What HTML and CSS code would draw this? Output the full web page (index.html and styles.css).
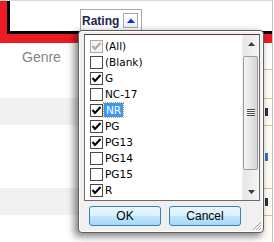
FILE: index.html
```html
<!DOCTYPE html>
<html lang="en">
<head>
    <title>Rating filter</title>
    <link rel="stylesheet" href="styles.css">
</head>
<body>
    <div class="page">
        <div class="banner">
            <div class="banner-inner">
                <div class="col-head">
                    <span class="col-title">Rating</span>
                    <span class="filter-btn">
                        <svg width="8" height="5" viewBox="0 0 8 5"><polygon points="0,5 4,0.5 8,5" fill="#0b2fd6"/></svg>
                    </span>
                </div>
            </div>
        </div>
        <div class="genre">Genre</div>
        <div class="rows">
            <div class="row top"><span class="cell"></span><span class="edge"></span></div>
            <div class="row alt"><span class="cell"></span><span class="edge"><i class="mark"></i></span></div>
            <div class="row tall"><span class="cell"></span><span class="edge"><i class="mark blue"></i></span></div>
            <div class="row alt"><span class="cell"></span><span class="edge"><i class="mark"></i></span></div>
            <div class="row"><span class="cell"></span><span class="edge"></span></div>
        </div>

        <div class="popup">
            <div class="listbox">
                <ul class="items">
                    <li class="item"><span class="cb disabled"><svg viewBox="0 0 11 11"><polyline points="1.5,5 4,8 9.5,2" /></svg></span><span class="label">(All)</span></li>
                    <li class="item"><span class="cb"></span><span class="label">(Blank)</span></li>
                    <li class="item"><span class="cb"><svg viewBox="0 0 11 11"><polyline points="1.5,5 4,8 9.5,2" /></svg></span><span class="label">G</span></li>
                    <li class="item"><span class="cb"></span><span class="label">NC-17</span></li>
                    <li class="item"><span class="cb"><svg viewBox="0 0 11 11"><polyline points="1.5,5 4,8 9.5,2" /></svg></span><span class="label selected">NR</span></li>
                    <li class="item"><span class="cb"><svg viewBox="0 0 11 11"><polyline points="1.5,5 4,8 9.5,2" /></svg></span><span class="label">PG</span></li>
                    <li class="item"><span class="cb"><svg viewBox="0 0 11 11"><polyline points="1.5,5 4,8 9.5,2" /></svg></span><span class="label">PG13</span></li>
                    <li class="item"><span class="cb"></span><span class="label">PG14</span></li>
                    <li class="item"><span class="cb"></span><span class="label">PG15</span></li>
                    <li class="item"><span class="cb"><svg viewBox="0 0 11 11"><polyline points="1.5,5 4,8 9.5,2" /></svg></span><span class="label">R</span></li>
                </ul>
                <div class="scrollbar">
                    <div class="sb-arrow">
                        <svg width="7" height="4" viewBox="0 0 7 4"><polygon points="0,4 3.5,0 7,4" fill="#3a3a3a"/></svg>
                    </div>
                    <div class="sb-track">
                        <div class="thumb">
                            <svg width="8" height="8" viewBox="0 0 8 8">
                                <rect x="0" y="0" width="8" height="1" fill="#4a4a4a"/>
                                <rect x="0" y="2" width="8" height="1" fill="#4a4a4a"/>
                                <rect x="0" y="4" width="8" height="1" fill="#4a4a4a"/>
                                <rect x="0" y="6" width="8" height="1" fill="#4a4a4a"/>
                                <rect x="0" y="1" width="8" height="1" fill="#ffffff"/>
                                <rect x="0" y="3" width="8" height="1" fill="#ffffff"/>
                                <rect x="0" y="5" width="8" height="1" fill="#ffffff"/>
                            </svg>
                        </div>
                    </div>
                    <div class="sb-arrow">
                        <svg width="7" height="4" viewBox="0 0 7 4"><polygon points="0,0 3.5,4 7,0" fill="#3a3a3a"/></svg>
                    </div>
                </div>
            </div>
            <div class="buttons">
                <button class="btn">OK</button>
                <button class="btn">Cancel</button>
            </div>
            <svg class="grip" width="10" height="10" viewBox="0 0 10 10">
                <line x1="9" y1="1" x2="1" y2="9" stroke="#9a9a9a" stroke-width="1"/>
                <line x1="9" y1="4" x2="4" y2="9" stroke="#9a9a9a" stroke-width="1"/>
                <line x1="9" y1="7" x2="7" y2="9" stroke="#9a9a9a" stroke-width="1"/>
                <line x1="10" y1="2" x2="2" y2="10" stroke="#ffffff" stroke-width="1"/>
                <line x1="10" y1="5" x2="5" y2="10" stroke="#ffffff" stroke-width="1"/>
            </svg>
        </div>
    </div>
</body>
</html>
```

FILE: styles.css
```css
html, body {
    margin: 0;
    padding: 0;
    background: #ffffff;
}
.page {
    position: relative;
    width: 272px;
    height: 241px;
    border-top: 1px solid #dadada;
    border-right: 1px solid #c4c4c4;
    border-bottom: 1px solid #c4c4c4;
    overflow: hidden;
    font-family: "Liberation Sans", Arial, sans-serif;
}
.banner {
    border-left: 7px solid #ed1c24;
    border-bottom: 9px solid #ed1c24;
}
.banner-inner {
    border-left: 3px solid #000000;
    border-bottom: 3px solid #000000;
    padding-top: 8px;
    padding-left: 70px;
    height: 22px;
}
.col-head {
    display: flex;
    align-items: center;
    width: 59px;
    height: 22px;
    border: 1px solid #a9a9a9;
    border-bottom: 0;
    padding-left: 1px;
    background: #ffffff;
}
.col-title {
    font-weight: bold;
    font-size: 12px;
    color: #1c2648;
    width: 41px;
}
.filter-btn {
    display: flex;
    align-items: center;
    justify-content: center;
    width: 13px;
    height: 13px;
    margin-top: -1px;
    border: 1px solid #a7a7a7;
    background: linear-gradient(#ffffff, #eef0f4);
}
.genre {
    padding: 6px 0 0 22px;
    height: 20px;
    font-size: 14px;
    color: #858585;
}
.rows {
    display: flex;
    flex-direction: column;
}
.row {
    display: flex;
    height: 27px;
}
.row.top {
    height: 29px;
}
.row.tall {
    height: 63px;
}
.row.alt {
    background: #f1f1f1;
}
.cell {
    flex: 1;
}
.edge {
    display: flex;
    align-items: center;
    width: 8px;
    border-top: 1px solid #d7c38c;
    background: #fffdf3;
}
.mark {
    width: 3px;
    height: 8px;
    margin-left: 1px;
    background: #2a2f4a;
}
.mark.blue {
    background: #3a6fc4;
}

.popup {
    position: absolute;
    left: 78px;
    top: 29px;
    width: 186px;
    height: 203px;
    box-sizing: border-box;
    border: 1px solid #5e5e5e;
    border-radius: 4px;
    background: #f0f0f0;
    box-shadow: -3px 3px 7px 1px rgba(0, 0, 0, 0.45), inset 0 0 0 1px #ffffff;
    padding: 3px 3px 0 5px;
}
.listbox {
    display: flex;
    height: 165px;
    border: 1px solid #6f6a6a;
    border-top-color: #5a3434;
    background: #ffffff;
}
.items {
    flex: 1;
    list-style: none;
    margin: 0;
    padding: 3px 0 0 5px;
}
.item {
    display: flex;
    align-items: center;
    height: 16px;
    font-family: "DejaVu Sans", sans-serif;
    font-size: 10.5px;
    color: #000000;
}
.cb {
    display: flex;
    width: 11px;
    height: 11px;
    border: 1px solid #4a4a4a;
    background: #ffffff;
    margin-right: 1px;
}
.cb svg {
    width: 11px;
    height: 11px;
}
.cb polyline {
    fill: none;
    stroke: #000000;
    stroke-width: 2;
}
.cb.disabled {
    border-color: #a8a8a8;
    background: #f4f4f4;
}
.cb.disabled polyline {
    stroke: #a8a8a8;
}
.label {
    padding: 1px 1px;
    line-height: 12px;
}
.label.selected {
    background: #3399ff;
    color: #ffffff;
    outline: 1px dotted #d89a30;
    padding: 1px 2px;
}
.scrollbar {
    display: flex;
    flex-direction: column;
    width: 16px;
    background: linear-gradient(90deg, #e6e6e6, #f4f4f4);
    border-left: 1px solid #f0f0f0;
}
.sb-arrow {
    display: flex;
    align-items: center;
    justify-content: center;
    height: 17px;
}
.sb-track {
    flex: 1;
    padding: 4px 0 13px;
}
.thumb {
    display: flex;
    align-items: center;
    justify-content: center;
    height: 100%;
    box-sizing: border-box;
    margin: 0 1px 0 0;
    border: 1px solid #9b9b9b;
    border-radius: 2px;
    background: linear-gradient(90deg, #f4f4f4, #e6e6e6 50%, #d4d4d4);
}
.buttons {
    display: flex;
    gap: 8px;
    margin: 5px 0 0 5px;
}
.btn {
    width: 72px;
    height: 20px;
    border: 1px solid #3c7fb1;
    border-radius: 3px;
    background: linear-gradient(#eaf6fd, #d9f0fc 50%, #bee6fd 51%, #a7d9f5);
    font-family: "Liberation Sans", Arial, sans-serif;
    font-size: 12px;
    color: #000000;
    padding: 0;
}
.grip {
    position: absolute;
    right: 1px;
    bottom: 1px;
}
```
